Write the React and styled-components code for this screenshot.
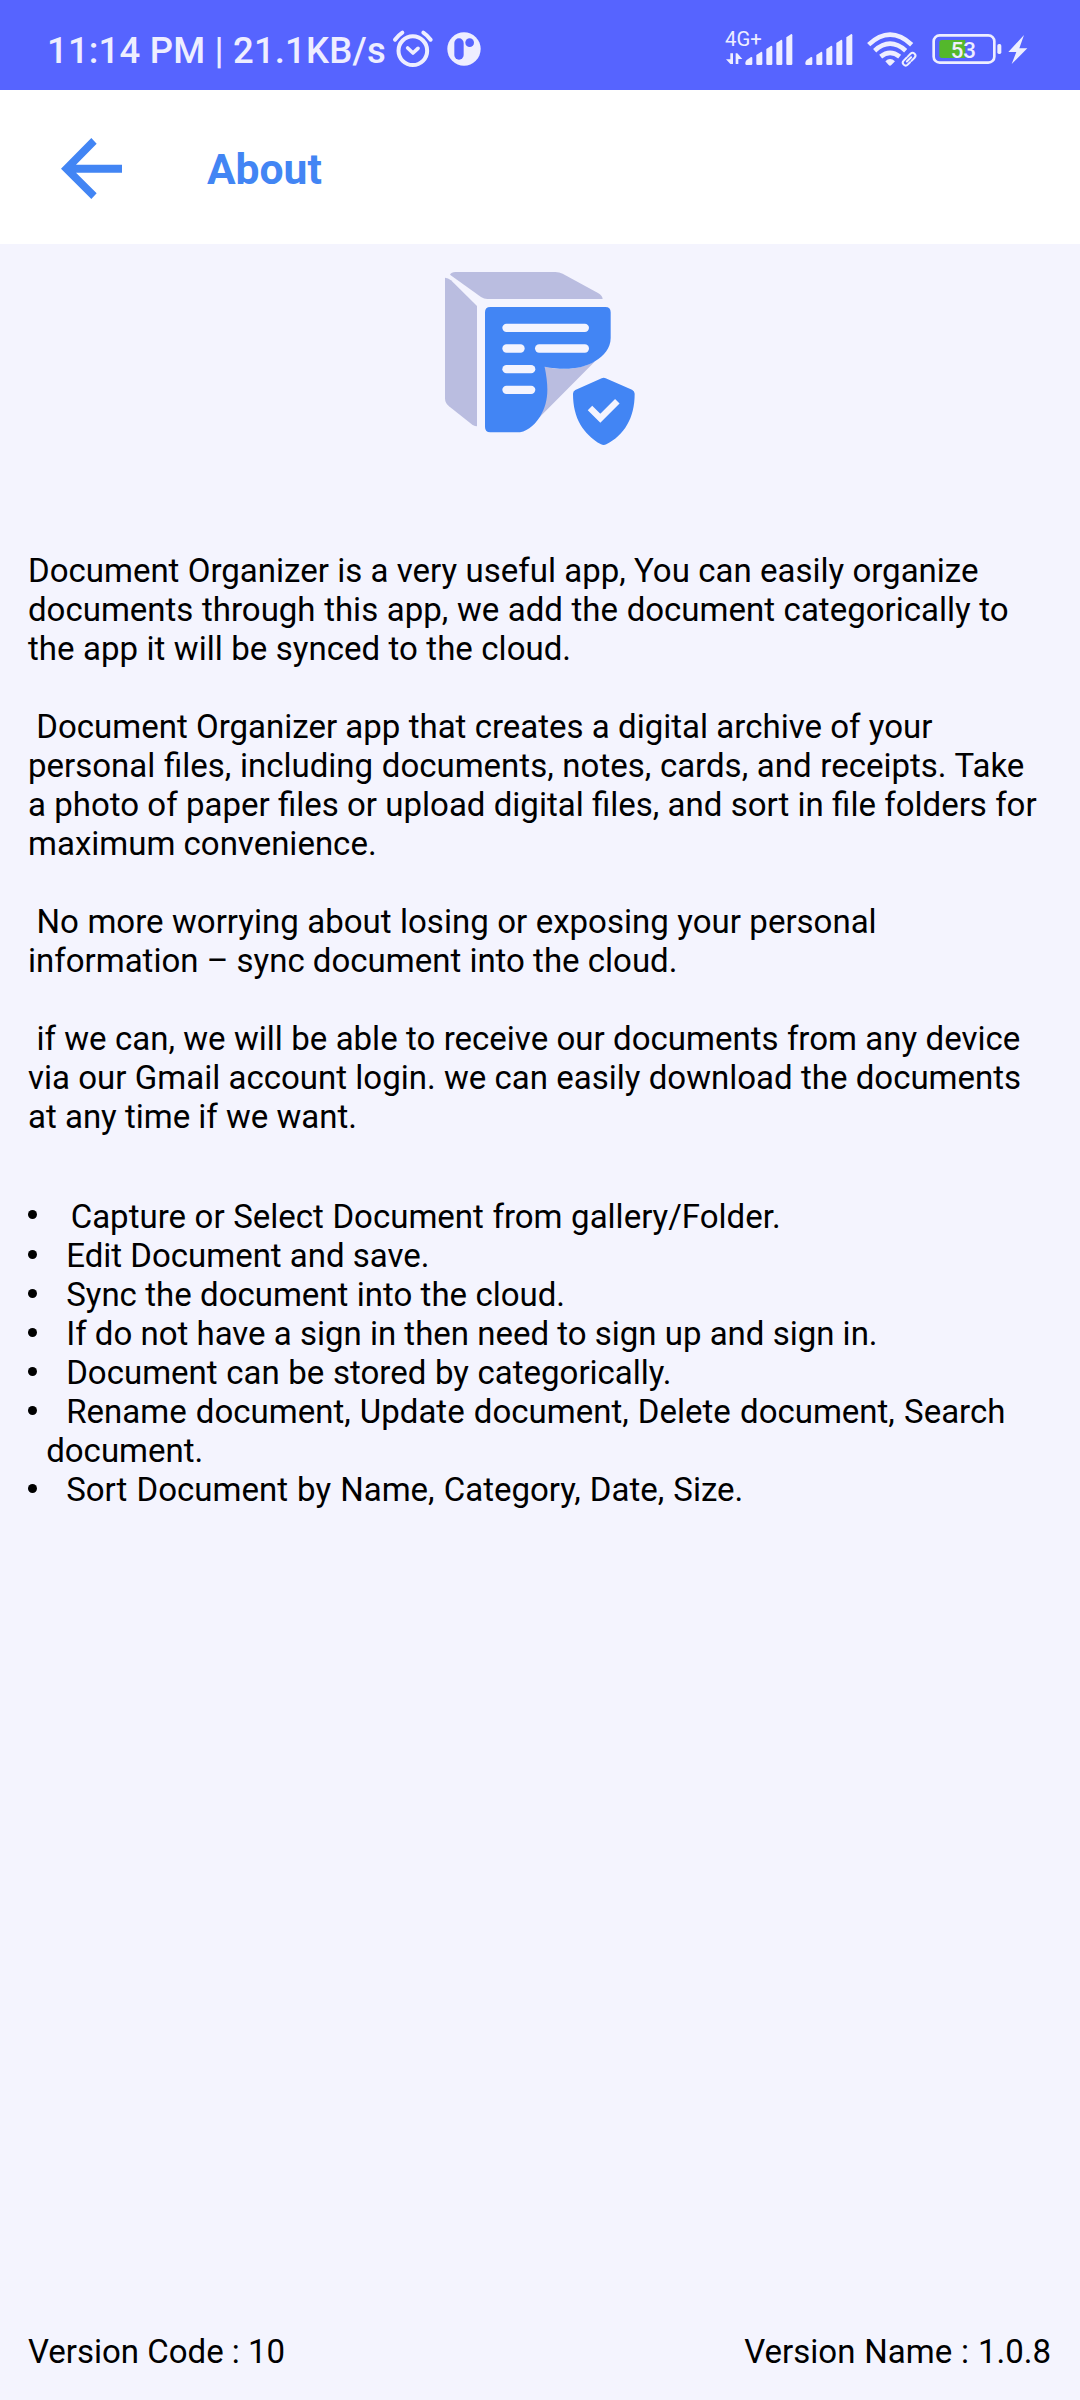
import React from "react";
import styled, { createGlobalStyle } from "styled-components";

const GlobalStyle = createGlobalStyle`
  * { box-sizing: border-box; }
  body { margin: 0; background: #f4f4fe; font-family: Roboto, sans-serif; }
`;

const Screen = styled.div`
  width: 1080px;
  height: 2400px;
  display: flex;
  flex-direction: column;
  background: #f4f4fe;
  color: #000;
  font-family: Roboto, sans-serif;
`;

const StatusBar = styled.header`
  height: 90px;
  flex: none;
  display: flex;
  justify-content: space-between;
  background: #5664ff;
  color: #eeeeff;
  padding: 30px 52px 0 47px;
`;

const StatusGroup = styled.div`
  display: flex;
  height: 40px;
`;

const StatusText = styled.span`
  font-size: 36.5px;
  font-weight: 500;
  line-height: 42px;
  white-space: pre;
  width: 346px;
  letter-spacing: 0.17px;
`;

const Icon = styled.svg`
  display: block;
  flex: none;
  overflow: visible;
  width: ${(p) => p.$w}px;
  height: ${(p) => p.$h || 40}px;
  margin-left: ${(p) => p.$gap || 0}px;
`;

const AppBar = styled.div`
  height: 154px;
  flex: none;
  display: flex;
  align-items: flex-start;
  background: #fff;
  padding: 48px 0 0 61px;
`;

const Title = styled.h1`
  margin: 0 0 0 85px;
  padding-top: 5.5px;
  font-size: 42.6px;
  line-height: 50px;
  font-weight: 700;
  color: #4285f4;
`;

const Content = styled.main`
  flex: 1;
  display: flex;
  flex-direction: column;
  padding: 27px 28px 0;
`;

const Logo = styled.svg`
  display: block;
  width: 190px;
  height: 176px;
  margin: 0 auto 104px;
  flex: none;
`;

const Copy = styled.div`
  display: flex;
  flex-direction: column;
  gap: 39px;
`;

const Paragraph = styled.p`
  margin: 0;
  font-size: 33px;
  line-height: 39px;
`;

const Line = styled.span`
  display: block;
  white-space: pre;
  word-spacing: ${(p) => p.$space || 0}px;
`;

const List = styled.ul`
  list-style: none;
  margin: 61px 0 0;
  padding: 0;
  font-size: 33px;
  line-height: 39px;
`;

const Item = styled.li`
  display: flex;
  align-items: flex-start;
`;

const Bullet = styled.span`
  flex: none;
  width: 9px;
  height: 9px;
  border-radius: 50%;
  background: #000;
  margin: ${(p) => (p.$first ? 13 : 14)}px 9.7px 0 -0.5px;
`;

const ItemText = styled.div`
  ${Line}:first-child {
    padding-left: ${(p) => p.$indent}px;
  }
`;

const Footer = styled.footer`
  flex: none;
  display: flex;
  justify-content: space-between;
  padding: 0 29px 29px 28px;
  font-size: 33px;
  line-height: 39px;
`;

const paragraphs = [
  [
    ["Document Organizer is a very useful app, You can easily organize", 0.14],
    ["documents through this app, we add the document categorically to", 0.42],
    ["the app it will be synced to the cloud.", 0.33],
  ],
  [
    [" Document Organizer app that creates a digital archive of your", 0.1],
    ["personal files, including documents, notes, cards, and receipts. Take", 0.5],
    ["a photo of paper files or upload digital files, and sort in file folders for", 0.1],
    ["maximum convenience.", 0],
  ],
  [
    [" No more worrying about losing or exposing your personal", 0.33],
    ["information – sync document into the cloud.", 0],
  ],
  [
    [" if we can, we will be able to receive our documents from any device", 0.2],
    ["via our Gmail account login. we can easily download the documents", 0.12],
    ["at any time if we want.", 0],
  ],
];

const items = [
  [["Capture or Select Document from gallery/Folder.", 0.4]],
  [["Edit Document and save.", 0]],
  [["Sync the document into the cloud.", 0.15]],
  [["If do not have a sign in then need to sign up and sign in.", 0]],
  [["Document can be stored by categorically.", 0.45]],
  [["Rename document, Update document, Delete document, Search", 1], ["document.", 0]],
  [["Sort Document by Name, Category, Date, Size.", 0.95]],
];

const FG = "#eeeeff";

const bar = (x, top, w = 18) =>
  `M${x} ${top + 10}L${x + w - 3} ${top}Q${x + w} ${top} ${x + w} ${top + 4}V161Q${x + w} 165 ${x + w - 4} 165H${x + 4}Q${x} 165 ${x} 161Z`;

function Bars({ x }) {
  return (
    <g fill={FG}>
      <path d={`M${x} 159Q${x} 154 ${x + 4} 150L${x + 17} 141Q${x + 21} 140 ${x + 21} 144V161Q${x + 21} 165 ${x + 17} 165H${x + 4}Q${x} 165 ${x} 161Z`} />
      <path d={bar(x + 33, 125)} />
      <path d={bar(x + 63, 107)} />
      <path d={bar(x + 93, 89)} />
      <path d={bar(x + 123, 72)} />
    </g>
  );
}

function AlarmIcon() {
  return (
    <Icon $w={40} viewBox="1178 90 120 120" fill="none" stroke={FG} strokeLinecap="round" strokeLinejoin="round">
      <circle cx="1237.500" cy="152" r="43" strokeWidth="12" />
      <path d="M1222 144l16 15 15-14" strokeWidth="11" />
      <path d="M1184 119q10-13 22-21M1291 119q-10-13-22-21" strokeWidth="12" />
    </Icon>
  );
}

function AppBadgeIcon() {
  return (
    <Icon $w={34} $gap={14} viewBox="1341 90 102 120">
      <circle cx="1392" cy="147" r="50" fill={FG} />
      <rect x="1363" y="115" width="28" height="64" rx="14" fill="#5664ff" />
      <circle cx="1409" cy="128" r="13" fill="#5664ff" />
    </Icon>
  );
}

function MobileSignal() {
  return (
    <Icon $w={68} $h={50} viewBox="75 30 204 150" style={undefined}>
      <text x="75" y="107" fontSize="59" fontFamily="Roboto, sans-serif" fill={FG} textLength="110" lengthAdjust="spacingAndGlyphs">4G+</text>
      <path fill={FG} d="M91 130h8v32h-8L78 148h13zM107 130h5l15 17h-12v15h-8z" />
      <Bars x={136} />
    </Icon>
  );
}

const SignalSlot = styled.div`
  display: flex;
  align-items: flex-end;
  height: 40px;
`;

function WifiIcon() {
  return (
    <Icon $w={50} $gap={13.67} viewBox="500 60 150 120">
      <g fill="none" stroke={FG} strokeWidth="14">
        <path d="M505 104Q569 44 634 104" />
        <path d="M523 122Q569 80 616 122" />
        <path d="M541 140Q569 117 598 140" />
      </g>
      <path fill={FG} d="M555 154q14-14 29 0l-11 11q-4 4-8 0z" />
      <g fill="none" stroke={FG} strokeWidth="6" transform="rotate(-45 626 148)">
        <path d="M622 156.500h-10a8.500 8.500 0 0 1 0-17h12M629 139.500h12a8.500 8.500 0 0 1 0 17h-13M617 148h18" strokeLinecap="round" />
      </g>
    </Icon>
  );
}

function BatteryIcon() {
  return (
    <Icon $w={70} $gap={15} viewBox="695 60 210 120">
      <rect x="700" y="76" width="182" height="82" rx="18" fill="none" stroke={FG} strokeWidth="8" />
      <path d="M725 90h70v54h-70q-8 0-8-8V98q0-8 8-8z" fill="#54b82c" />
      <rect x="891" y="102" width="12" height="30" rx="5" fill={FG} />
      <text x="751" y="143" fontSize="67" fontWeight="500" fontFamily="Roboto, sans-serif" fill={FG} textLength="76" lengthAdjust="spacingAndGlyphs">53</text>
    </Icon>
  );
}

export default function App() {
  return (
    <>
      <GlobalStyle />
      <Screen>
        <StatusBar>
          <StatusGroup>
            <StatusText>11:14 PM | 21.1KB/s</StatusText>
            <AlarmIcon />
            <AppBadgeIcon />
          </StatusGroup>
          <StatusGroup>
            <SignalSlot>
              <MobileSignal />
            </SignalSlot>
            <Icon $w={48} $gap={12} viewBox="315 60 144 120">
              <Bars x={316} />
            </Icon>
            <WifiIcon />
            <BatteryIcon />
            <Icon $w={20} $gap={6} viewBox="923 60 60 120">
              <path d="M971 75L924 126H948L934 162L981 115H957Z" fill={FG} />
            </Icon>
          </StatusGroup>
        </StatusBar>
        <AppBar>
          <Icon $w={61} $h={61} viewBox="183 413 183 183">
            <path fill="#4285f4" d="M274 413l16 17-62 63h138v24H228l62 62-16 17-91-91z" />
          </Icon>
          <Title>About</Title>
        </AppBar>
        <Content>
          <Logo viewBox="75 63 570 528">
            <g fill="#babde0">
              <path d="M90 74Q94 66 106 66H406Q418 66 428 71L534 129Q547 137 548 147H202Q192 147 183 141Z" />
              <path d="M75 83Q84 83 93 91L171 168V529Q165 529 158 525L87 469Q75 459 75 445Z" />
              <path d="M374 350Q460 370 526 333L360 500Z" />
            </g>
            <path fill="#4285f4" d="M211 171H556Q572 171 572 187V264C572 296 551 317 526 333C486 358 432 362 374 350C388 420 384 460 360 500C340 530 318 547 290 547H211Q195 547 195 531V187Q195 171 211 171Z" />
            <g fill="#f4f4fe">
              <rect x="247" y="221" width="260" height="25" rx="12.500" />
              <rect x="247" y="283" width="67" height="25" rx="12.500" />
              <rect x="345" y="283" width="162" height="25" rx="12.500" />
              <rect x="247" y="345" width="99" height="25" rx="12.500" />
              <rect x="247" y="407" width="99" height="25" rx="12.500" />
            </g>
            <path fill="#4285f4" d="M545 385Q551 382 557 385L636 419Q644 423 644 431C644 505 612 555 559 583Q551 587 543 583C490 552 459 505 459 431Q459 423 466 420Z" />
            <path fill="none" stroke="#f4f4fe" strokeWidth="19" d="M510 474l31 31 51-51" />
          </Logo>
          <Copy>
            {paragraphs.map((lines, i) => (
              <Paragraph key={i}>
                {lines.map(([text, space]) => (
                  <Line key={text} $space={space}>{text}</Line>
                ))}
              </Paragraph>
            ))}
          </Copy>
          <List>
            {items.map((lines, i) => (
              <Item key={i}>
                <Bullet $first={i === 0} />
                <ItemText $indent={i === 0 ? 24.5 : 20}>
                  {lines.map(([text, space]) => (
                    <Line key={text} $space={space}>{text}</Line>
                  ))}
                </ItemText>
              </Item>
            ))}
          </List>
        </Content>
        <Footer>
          <Line>Version Code : 10</Line>
          <Line $space={0.7}>Version Name : 1.0.8</Line>
        </Footer>
      </Screen>
    </>
  );
}
